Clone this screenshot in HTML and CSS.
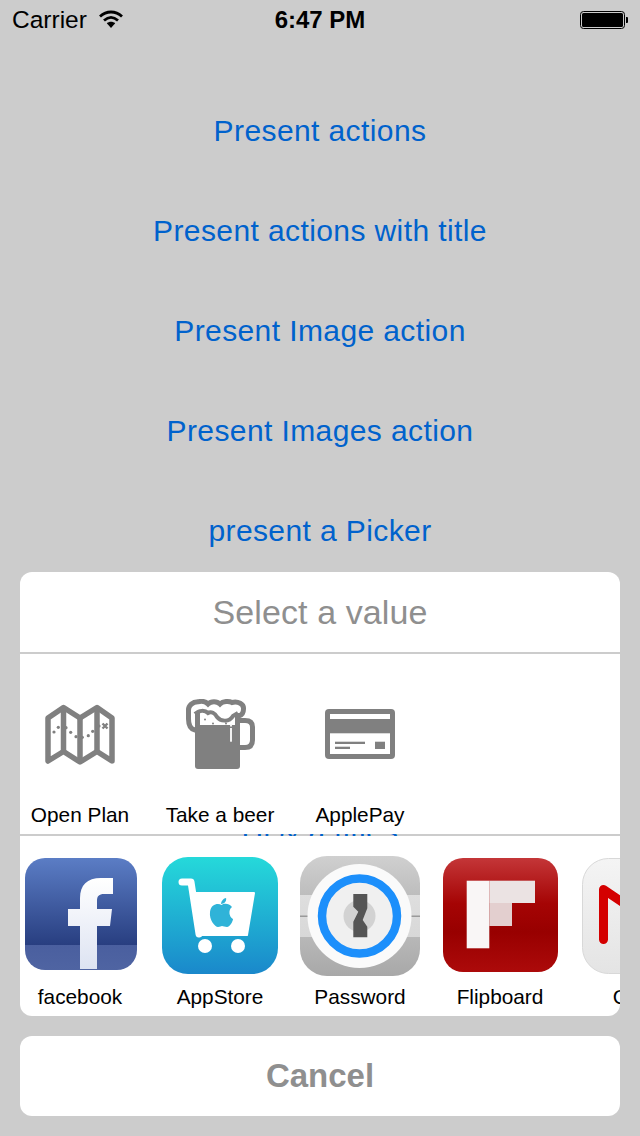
FILE: index.html
```html
<!DOCTYPE html>
<html lang="en">
<head>
<meta charset="utf-8">
<title>Actions</title>
<link rel="stylesheet" href="styles.css">
</head>
<body>
<div class="screen">
  <header class="status">
    <div class="status-left">
      <span class="carrier">Carrier</span>
      <svg class="wifi" width="24" height="18" viewBox="0 0 24 18"><path d="M1 6.500C7.500 .5 16.500 .5 23 6.500M5 10.500C9.500 6.500 14.500 6.500 19 10.500" fill="none" stroke="#000" stroke-width="2.800"/><path d="M12 18L7.800 13.200C10.300 11.200 13.700 11.200 16.200 13.200Z"/></svg>
    </div>
    <span class="time">6:47 PM</span>
    <div class="status-right">
      <svg width="48" height="20" viewBox="0 0 48 20"><rect x=".5" y="1.500" width="44" height="17" rx="3" fill="none" stroke="#000"/><rect x="2" y="3" width="41" height="14" rx="1.500"/><path d="M46 7h1a1 1 0 0 1 1 1v4a1 1 0 0 1-1 1h-1z"/></svg>
    </div>
  </header>
  <main class="actions">
    <a class="action">Present actions</a>
    <a class="action">Present actions with title</a>
    <a class="action">Present Image action</a>
    <a class="action">Present Images action</a>
    <a class="action">present a Picker</a>
    <a class="action"></a>
    <a class="action"></a>
    <a class="action">Hi &amp; a titles</a>
  </main>
  <section class="sheet">
    <div class="panel">
      <div class="title">Select a value</div>
      <div class="row">
        <div class="cell">
          <div class="slot">
            <svg width="70" height="70" viewBox="0 0 70 70"><g fill="none" stroke="#808080" stroke-width="5.500" stroke-linejoin="round"><path d="M3 19L18.500 8.500L35 19L52 8.500L67 19V62L52 52.500L35 63L18.500 52.500L3 62Z"/><path d="M18.500 8.500V52.500M35 19V63M52 8.500V52.500"/></g><g fill="#808080"><circle cx="9" cy="33" r="1.600"/><circle cx="13.300" cy="28.300" r="1.600"/><circle cx="21" cy="28.700" r="1.600"/><circle cx="25.700" cy="33.300" r="1.600"/><circle cx="31" cy="37.700" r="1.600"/><circle cx="37.300" cy="38.300" r="1.600"/><circle cx="43.300" cy="36.700" r="1.600"/><circle cx="47.700" cy="32.300" r="1.600"/><circle cx="54" cy="27" r="1.600"/></g><path d="M57.500 24.500L62.500 29.500M62.500 24.500L57.500 29.500" stroke="#808080" stroke-width="2.400"/></svg>
          </div>
          <span class="label">Open Plan</span>
        </div>
        <div class="cell">
          <div class="slot">
            <svg width="70" height="70" viewBox="0 0 70 70"><path d="M55 21.500H60C65 21.500 67.500 24 67.500 28V41C67.500 46 65 48.500 60 48.500H55" fill="none" stroke="#808080" stroke-width="5"/><path d="M10 14H55V67A3 3 0 0 1 52 70H13A3 3 0 0 1 10 67Z" fill="#808080"/><rect x="15" y="14" width="35" height="12" fill="#fff"/><path d="M10 31C5 30 3.500 26 3.500 20V12C3 6 8 3 13 2.800C16 2 20 2 23 5C26 2 32 2 35 5C38 2 44 2 47 3.500C53 2 59 5 58.500 10C58.500 14 57 16 54 17" fill="none" stroke="#808080" stroke-width="5" stroke-linecap="round"/><path d="M10 15C14 11 20 11 23 14C26 12 30 14 32 18C35 22 44 24 48 17L53 14" fill="none" stroke="#808080" stroke-width="4"/><rect x="45" y="29" width="2" height="13.700" fill="#f2f2f2"/><rect x="45" y="25.500" width="2" height="2" fill="#f2f2f2"/><circle cx="20" cy="20.500" r="1" fill="#808080"/><circle cx="28" cy="24.500" r="1" fill="#808080"/><circle cx="41" cy="24.500" r="1" fill="#808080"/></svg>
          </div>
          <span class="label">Take a beer</span>
        </div>
        <div class="cell">
          <div class="slot">
            <svg width="70" height="70" viewBox="0 0 70 70"><rect y="10" width="70" height="50" rx="4" fill="#808080"/><rect x="5" y="15" width="60" height="5" fill="#fff"/><rect x="5" y="34.300" width="60" height="20.700" fill="#fff"/><rect x="10" y="42.700" width="30" height="2.300" fill="#808080"/><rect x="10" y="47.700" width="15" height="2.300" fill="#808080"/><rect x="50" y="42.700" width="10" height="7.300" fill="#808080"/></svg>
          </div>
          <span class="label">ApplePay</span>
        </div>
      </div>
      <div class="row row-end">
        <div class="cell">
          <div class="slot">
            <svg class="icon-fb" width="112" height="112" viewBox="0 0 112 112"><defs><linearGradient id="fb" x1="0" y1="0" x2="0" y2="1"><stop offset="0" stop-color="#5b7dc5"/><stop offset=".78" stop-color="#283e80"/><stop offset=".78" stop-color="#4a5f9f"/><stop offset="1" stop-color="#4f64a2"/></linearGradient><linearGradient id="fbf" x1="0" y1="0" x2="0" y2="1"><stop offset="0" stop-color="#fff"/><stop offset="1" stop-color="#dde3f2"/></linearGradient></defs><rect width="112" height="112" rx="20" fill="url(#fb)"/><path d="M55 111V68H43V51H55V40C55 27 62 20 76 20H88V36H79C74 36 72 38 72 43V51H87L85 68H72V111Z" fill="url(#fbf)"/></svg>
          </div>
          <span class="label">facebook</span>
        </div>
        <div class="cell">
          <div class="slot">
            <svg class="icon-as" width="116" height="117" viewBox="0 0 116 117"><defs><linearGradient id="as" x1="0" y1="0" x2="0" y2="1"><stop offset="0" stop-color="#25d9da"/><stop offset="1" stop-color="#1a88cb"/></linearGradient></defs><rect width="116" height="117" rx="26" fill="url(#as)"/><path d="M20 25H29L37 77" fill="none" stroke="#fff" stroke-width="7" stroke-linecap="round" stroke-linejoin="round"/><path d="M29 36H92L85 78H36Z" fill="#fff" stroke="#fff" stroke-width="2" stroke-linejoin="round"/><circle cx="43" cy="89" r="7" fill="#fff"/><circle cx="76" cy="89" r="7" fill="#fff"/><path d="M59.500 48C56 46 49 47 48 55C47 63 53 70 56 70C58 70 59 69 60 69C61 69 63 70 65 70C68 70 71 64 71 62C67 60 66 53 70 50C67 46 62 46 59.500 48Z" fill="#2fb3d8"/><path d="M59 47C59 44 62 41 64 41C65 44 62 47 59 47Z" fill="#2fb3d8"/></svg>
          </div>
          <span class="label">AppStore</span>
        </div>
        <div class="cell">
          <div class="slot">
            <svg width="120" height="120" viewBox="0 0 120 120"><defs><linearGradient id="pa" x1="0" y1="0" x2="0" y2="1"><stop offset="0" stop-color="#d0d0d0"/><stop offset=".325" stop-color="#bdbdbd"/><stop offset=".325" stop-color="#dedede"/><stop offset=".675" stop-color="#d8d8d8"/><stop offset=".675" stop-color="#b8b8b8"/><stop offset="1" stop-color="#a8a8a8"/></linearGradient></defs><rect width="120" height="120" rx="27" fill="url(#pa)"/><rect y="59.500" width="120" height="1.500" fill="#9a9a9a"/><circle cx="59.500" cy="60" r="52" fill="#fafafa"/><circle cx="59.500" cy="60" r="37.500" fill="#f0f0f0" stroke="#1c8ffb" stroke-width="8.500"/><circle cx="59.500" cy="60" r="16" fill="#d2d2d2"/><path d="M53.300 38H67.300V52.300L62.700 64L67.300 70.700V81.300H53.300V65.700L58.300 55.700L53.300 50.700Z" fill="#555"/></svg>
          </div>
          <span class="label">Password</span>
        </div>
        <div class="cell">
          <div class="slot">
            <svg class="icon-fl" width="115" height="114" viewBox="0 0 115 114"><defs><linearGradient id="fl" x1="0" y1="0" x2="0" y2="1"><stop offset="0" stop-color="#c43638"/><stop offset=".4" stop-color="#a50404"/><stop offset=".65" stop-color="#980000"/><stop offset="1" stop-color="#ac0a0a"/></linearGradient></defs><rect width="115" height="114" rx="20" fill="url(#fl)"/><rect x="23.700" y="22.700" width="22.600" height="67.600" fill="#f9f6f6"/><rect x="46.300" y="22.700" width="45.700" height="22.300" fill="#ebe3e3"/><rect x="46.300" y="45" width="22.700" height="23" fill="#e3cfcf"/></svg>
          </div>
          <span class="label">Flipboard</span>
        </div>
        <div class="cell">
          <div class="slot">
            <svg width="116" height="116" viewBox="0 0 116 116"><defs><linearGradient id="gm" x1="0" y1="0" x2="0" y2="1"><stop offset="0" stop-color="#f4f4f4"/><stop offset="1" stop-color="#e4e4e4"/></linearGradient></defs><rect x=".5" y=".5" width="115" height="115" rx="26" fill="url(#gm)" stroke="#d8d8d8"/><path d="M21.500 81.500V31.500L58 56L95 31.500V81.500" fill="none" stroke="#d40000" stroke-width="9" stroke-linejoin="round" stroke-linecap="round"/></svg>
          </div>
          <span class="label">Gmail</span>
        </div>
      </div>
    </div>
    <div class="cancel">Cancel</div>
  </section>
</div>
</body>
</html>
```
FILE: styles.css
```css
* { box-sizing: border-box; }
html, body { margin: 0; height: 100%; }
body { font-family: "Liberation Sans", Arial, sans-serif; background: #ccc; }
.screen { position: relative; width: 640px; height: 1136px; overflow: hidden; background: #ccc; }

.status { display: grid; grid-template-columns: 1fr auto 1fr; align-items: center; height: 40px; padding: 0 12px; color: #000; }
.status-left { display: flex; align-items: center; gap: 12px; }
.carrier { font-size: 24.5px; }
.time { font-size: 24px; font-weight: 700; }
.status-right { display: flex; justify-content: flex-end; }
.wifi { margin-top: -2px; }

.actions { display: flex; flex-direction: column; padding-top: 41px; }
.action { height: 100px; display: flex; align-items: center; justify-content: center; font-size: 30px; letter-spacing: .4px; color: #0062cc; }

.sheet { position: absolute; left: 20px; right: 20px; bottom: 20px; display: flex; flex-direction: column; gap: 20px; }
.panel { display: flex; flex-direction: column; gap: 2px; }
.title { height: 80px; background: #fff; border-radius: 12px 12px 0 0; display: flex; align-items: center; justify-content: center; font-size: 34px; letter-spacing: .1px; color: #8f8f8f; }
.row { height: 180px; background: #fff; display: flex; gap: 20px; overflow: hidden; }
.row-end { border-radius: 0 0 12px 12px; }
.cell { flex: 0 0 120px; display: flex; flex-direction: column; align-items: center; padding-top: 10px; }
.slot { height: 140px; display: flex; align-items: center; justify-content: center; }
.icon-fb { margin: 0 0 4px 2px; }
.icon-as { margin-bottom: 1px; }
.icon-fl { margin-bottom: 2px; }
.label { font-size: 20.8px; line-height: 22px; color: #000; white-space: nowrap; }
.cancel { height: 80px; background: #fff; border-radius: 12px; display: flex; align-items: center; justify-content: center; font-size: 33px; font-weight: 700; color: #8f8f8f; }
```
